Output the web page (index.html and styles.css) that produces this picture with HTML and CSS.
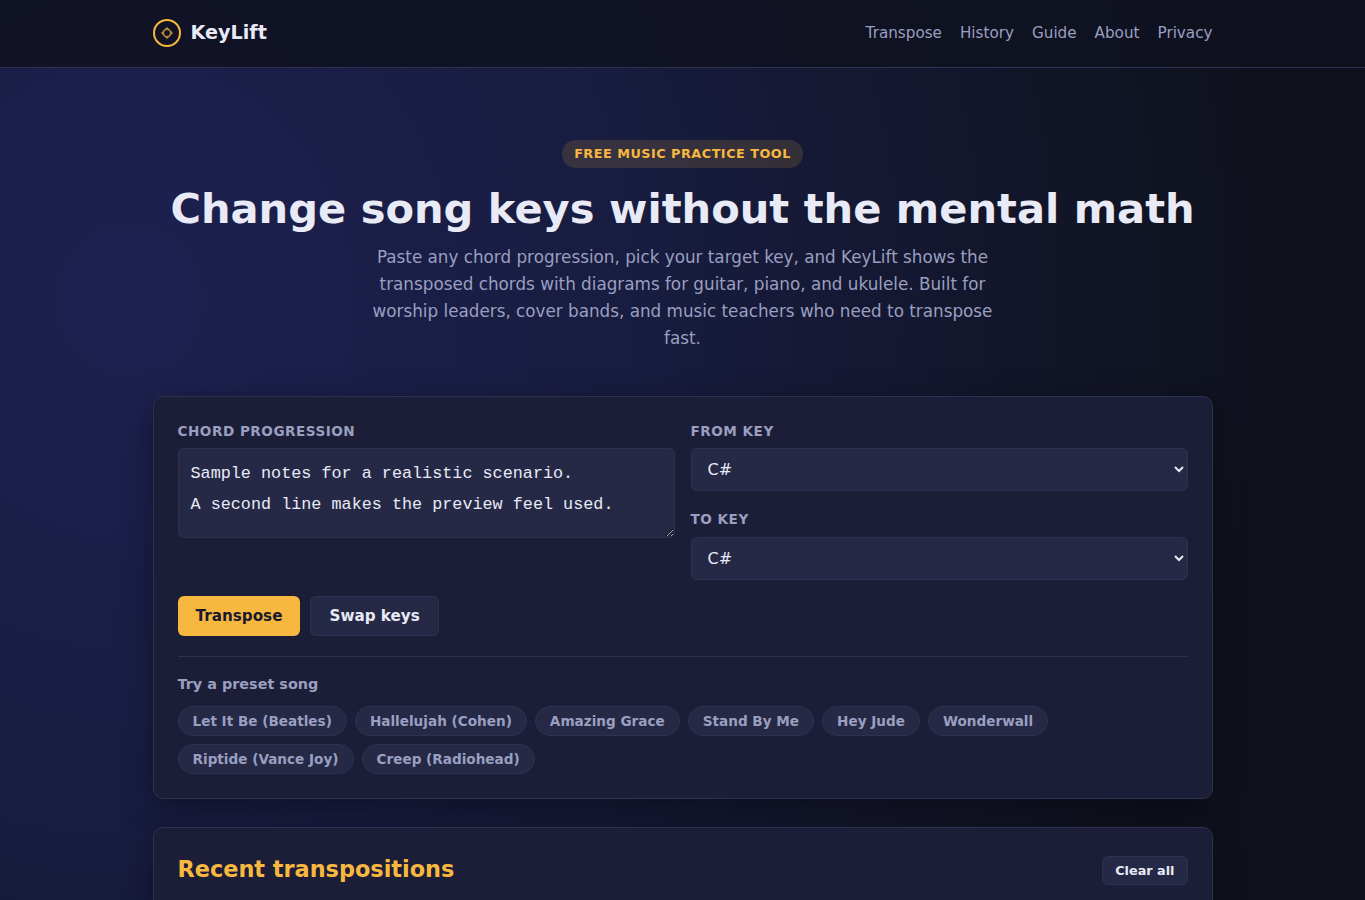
FILE: index.html
```html
<!DOCTYPE html>
<html lang="en">
<head>
    <meta charset="UTF-8">
    <meta name="viewport" content="width=device-width, initial-scale=1.0">
    <title>KeyLift - Chord Transposer</title>
    <link rel="stylesheet" href="styles.css">
</head>
<body>
    <!-- Header -->
    <header class="site-header">
        <div class="container header-inner">
            <a class="brand" href="#">
                <svg class="brand-icon" width="28" height="28" viewBox="0 0 28 28" fill="none" stroke="#f8b840">
                    <circle cx="14" cy="14" r="13" stroke-width="2"/>
                    <g opacity="0.75">
                        <circle cx="14" cy="14" r="3.7" stroke-width="1.6"/>
                        <path d="M12.6 10.2L14 8.8l1.4 1.4M12.6 17.8l1.4 1.4 1.4-1.4M10.2 12.6L8.8 14l1.4 1.4M17.8 12.6l1.4 1.4-1.4 1.4" stroke-width="1.1"/>
                    </g>
                </svg>
                <span>KeyLift</span>
            </a>
            <nav class="nav">
                <a href="#transpose">Transpose</a>
                <a href="#history">History</a>
                <a href="#guide">Guide</a>
                <a href="#about">About</a>
                <a href="#privacy">Privacy</a>
            </nav>
        </div>
    </header>

    <main class="container">
        <!-- Hero -->
        <section class="hero">
            <span class="badge">Free music practice tool</span>
            <h1>Change song keys without the mental math</h1>
            <p>Paste any chord progression, pick your target key, and KeyLift shows the transposed chords with diagrams for guitar, piano, and ukulele. Built for worship leaders, cover bands, and music teachers who need to transpose fast.</p>
        </section>

        <!-- Transposer -->
        <section class="card" id="transpose">
            <div class="form-grid">
                <div class="field">
                    <label for="chords">Chord progression</label>
                    <textarea id="chords" spellcheck="false">Sample notes for a realistic scenario.
A second line makes the preview feel used.</textarea>
                </div>
                <div class="field-stack">
                    <div class="field">
                        <label for="fromKey">From key</label>
                        <select id="fromKey">
                            <option>C</option>
                            <option selected>C#</option>
                            <option>D</option>
                        </select>
                    </div>
                    <div class="field">
                        <label for="toKey">To key</label>
                        <select id="toKey">
                            <option>C</option>
                            <option selected>C#</option>
                            <option>D</option>
                        </select>
                    </div>
                </div>
            </div>
            <div class="actions">
                <button class="btn btn-primary" type="button">Transpose</button>
                <button class="btn btn-secondary" type="button">Swap keys</button>
            </div>
            <div class="presets">
                <h3>Try a preset song</h3>
                <div class="chips">
                    <button class="chip" type="button">Let It Be (Beatles)</button>
                    <button class="chip" type="button">Hallelujah (Cohen)</button>
                    <button class="chip" type="button">Amazing Grace</button>
                    <button class="chip" type="button">Stand By Me</button>
                    <button class="chip" type="button">Hey Jude</button>
                    <button class="chip" type="button">Wonderwall</button>
                    <button class="chip" type="button">Riptide (Vance Joy)</button>
                    <button class="chip" type="button">Creep (Radiohead)</button>
                </div>
            </div>
        </section>

        <!-- History -->
        <section class="card" id="history">
            <div class="section-head">
                <h2>Recent transpositions</h2>
                <button class="btn btn-secondary btn-small" type="button">Clear all</button>
            </div>
        </section>
    </main>
</body>
</html>
```
FILE: styles.css
```css
:root {
    --bg: #0f121d;
    --card: #1c1e37;
    --field: #252946;
    --border: #2e3250;
    --text: #e8eaf6;
    --muted: #9a9fc0;
    --accent: #f8b840;
}

* {
    margin: 0;
    padding: 0;
    box-sizing: border-box;
}

body {
    font-family: "DejaVu Sans", sans-serif;
    color: var(--text);
    line-height: 1.6;
    height: 900px;
    overflow: hidden;
    background: radial-gradient(ellipse 1130px 1200px at 130px 300px, #1d2150 0%, #181c3f 45%, #0f121d 100%) var(--bg);
}

.container {
    max-width: 1100px;
    margin: 0 auto;
    padding: 0 20px;
}

/* Header */
.site-header {
    background: rgba(15, 18, 32, 0.85);
    border-bottom: 1px solid var(--border);
}

.header-inner {
    height: 67px;
    padding-bottom: 1px;
    display: flex;
    align-items: center;
    justify-content: space-between;
}

.brand {
    display: flex;
    align-items: center;
    gap: 10px;
    color: var(--text);
    font-size: 19.2px;
    line-height: 30px;
    font-weight: 700;
    text-decoration: none;
}

.nav {
    display: flex;
    gap: 18px;
}

.nav a {
    color: var(--muted);
    font-size: 15.2px;
    text-decoration: none;
}

/* Hero */
.hero {
    text-align: center;
    padding: 72px 0 44px;
}

.badge {
    display: inline-block;
    background: rgba(248, 184, 64, 0.14);
    color: var(--accent);
    font-size: 12.8px;
    line-height: 20px;
    font-weight: 700;
    letter-spacing: 0.5px;
    text-transform: uppercase;
    padding: 4px 12px;
    border-radius: 999px;
    margin-bottom: 16px;
}

.hero h1 {
    font-size: 41.6px;
    line-height: 1.2;
    margin-bottom: 10px;
}

.hero p {
    max-width: 640px;
    margin: 0 auto;
    color: var(--muted);
    font-size: 16.8px;
    line-height: 27px;
}

/* Cards */
.card {
    background: var(--card);
    border: 1px solid var(--border);
    border-radius: 10px;
    padding: 24px;
    margin-bottom: 28px;
    box-shadow: 0 8px 32px rgba(0, 0, 0, 0.35);
}

.form-grid {
    display: grid;
    grid-template-columns: 1fr 1fr;
    gap: 16px;
}

.field-stack {
    display: flex;
    flex-direction: column;
    gap: 18px;
}

.field label {
    display: block;
    color: var(--muted);
    font-size: 13.6px;
    line-height: 21.4px;
    font-weight: 600;
    letter-spacing: 0.5px;
    text-transform: uppercase;
    margin-bottom: 6px;
}

textarea,
select {
    display: block;
    width: 100%;
    background: var(--field);
    color: var(--text);
    border: 1px solid var(--border);
    border-radius: 6px;
}

textarea {
    height: 90px;
    padding: 9px 12px;
    font-family: "Liberation Mono", monospace;
    font-size: 16.8px;
    line-height: 31px;
    resize: vertical;
}

select {
    height: 43px;
    padding: 0 12px;
    font-family: inherit;
    font-size: 16px;
}

.actions {
    display: flex;
    gap: 10px;
    margin-top: 16px;
}

.btn {
    border: none;
    border-radius: 6px;
    padding: 10px 18px;
    font-family: inherit;
    font-size: 15.2px;
    font-weight: 600;
    cursor: pointer;
}

.btn-primary {
    background: var(--accent);
    color: #1a1a2e;
}

.btn-secondary {
    background: var(--field);
    color: var(--text);
    border: 1px solid var(--border);
}

.btn-small {
    font-size: 12.8px;
    padding: 6px 12px;
}

/* Presets */
.presets {
    border-top: 1px solid var(--border);
    margin-top: 20px;
    padding-top: 16px;
}

.presets h3 {
    color: var(--muted);
    font-size: 14.4px;
    font-weight: 600;
    margin-bottom: 10px;
}

.chips {
    display: flex;
    flex-wrap: wrap;
    gap: 8px;
}

.chip {
    background: var(--field);
    color: var(--muted);
    border: 1px solid var(--border);
    border-radius: 999px;
    padding: 6px 14px;
    font-family: inherit;
    font-size: 13.6px;
    font-weight: 600;
    cursor: pointer;
}

/* History */
.section-head {
    display: flex;
    align-items: center;
    justify-content: space-between;
}

.section-head h2 {
    color: var(--accent);
    font-size: 22.4px;
}

.section-head .btn {
    margin-top: 2px;
}
```
